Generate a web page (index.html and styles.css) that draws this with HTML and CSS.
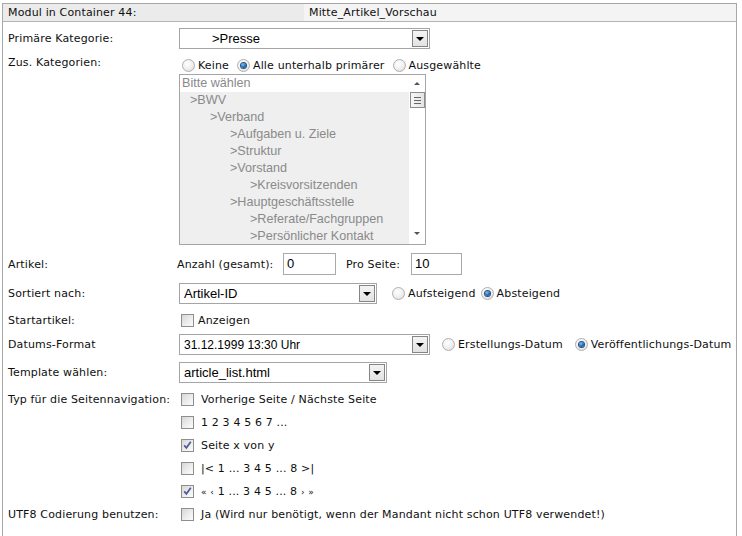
FILE: index.html
```html
<!DOCTYPE html>
<html lang="de">
<head>
<meta charset="utf-8">
<title>Modul</title>
<link rel="stylesheet" href="styles.css">
</head>
<body>
<div class="frame">
  <div class="head">
    <div class="head-l">Modul in Container 44:</div>
    <div class="head-r">Mitte_Artikel_Vorschau</div>
  </div>
  <div class="form">
    <div class="row r-primary">
      <div class="label">Primäre Kategorie:</div>
      <div class="ctrl">
        <div class="select w251"><span class="sel-text indent">&gt;Presse</span><span class="sel-btn"><span class="tri"></span></span></div>
      </div>
    </div>

    <div class="row r-zus">
      <div class="label">Zus. Kategorien:</div>
      <div class="ctrl col">
        <div class="opts zus-opts">
          <span class="opt"><span class="radio"></span>Keine</span>
          <span class="opt"><span class="radio on"></span>Alle unterhalb primärer</span>
          <span class="opt"><span class="radio"></span>Ausgewählte</span>
        </div>
        <div class="listbox">
          <div class="items">
            <div class="item first">Bitte wählen</div>
            <div class="item l1">&gt;BWV</div>
            <div class="item l2">&gt;Verband</div>
            <div class="item l3">&gt;Aufgaben u. Ziele</div>
            <div class="item l3">&gt;Struktur</div>
            <div class="item l3">&gt;Vorstand</div>
            <div class="item l4">&gt;Kreisvorsitzenden</div>
            <div class="item l3">&gt;Hauptgeschäftsstelle</div>
            <div class="item l4">&gt;Referate/Fachgruppen</div>
            <div class="item l4">&gt;Persönlicher Kontakt</div>
          </div>
          <div class="scroll">
            <span class="sarrow up"></span>
            <span class="thumb"><i></i><i></i><i></i></span>
            <span class="sarrow down"></span>
          </div>
        </div>
      </div>
    </div>

    <div class="row r-artikel">
      <div class="label">Artikel:</div>
      <div class="ctrl">
        <span class="lab-anzahl">Anzahl (gesamt):</span>
        <span class="input w53">0</span>
        <span class="lab-pro">Pro Seite:</span>
        <span class="input w52">10</span>
      </div>
    </div>

    <div class="row r-sort">
      <div class="label">Sortiert nach:</div>
      <div class="ctrl">
        <div class="select w198"><span class="sel-text">Artikel-ID</span><span class="sel-btn"><span class="tri"></span></span></div>
        <div class="opts sort-opts">
          <span class="opt"><span class="radio"></span>Aufsteigend</span>
          <span class="opt"><span class="radio on"></span>Absteigend</span>
        </div>
      </div>
    </div>

    <div class="row r-start">
      <div class="label">Startartikel:</div>
      <div class="ctrl">
        <span class="opt chk-opt"><span class="check"></span>Anzeigen</span>
      </div>
    </div>

    <div class="row r-datum">
      <div class="label">Datums-Format</div>
      <div class="ctrl">
        <div class="select w251"><span class="sel-text sm">31.12.1999 13:30 Uhr</span><span class="sel-btn"><span class="tri"></span></span></div>
        <div class="opts datum-opts">
          <span class="opt"><span class="radio"></span>Erstellungs-Datum</span>
          <span class="opt"><span class="radio on"></span>Veröffentlichungs-Datum</span>
        </div>
      </div>
    </div>

    <div class="row r-template">
      <div class="label">Template wählen:</div>
      <div class="ctrl">
        <div class="select w208"><span class="sel-text">article_list.html</span><span class="sel-btn"><span class="tri"></span></span></div>
      </div>
    </div>

    <div class="row r-typ">
      <div class="label">Typ für die Seitennavigation:</div>
      <div class="ctrl col">
        <span class="opt nav-opt"><span class="check"></span>Vorherige Seite / Nächste Seite</span>
        <span class="opt nav-opt"><span class="check"></span>1 2 3 4 5 6 7 ...</span>
        <span class="opt nav-opt"><span class="check on"><svg viewBox="0 0 13 13" width="13" height="13"><path d="M3.2 6.4 L5.4 8.8 L9.8 2.8" fill="none" stroke="#4a5c96" stroke-width="1.7"/></svg></span>Seite x von y</span>
        <span class="opt nav-opt"><span class="check"></span>|&lt; 1 ... 3 4 5 ... 8 &gt;|</span>
        <span class="opt nav-opt"><span class="check on"><svg viewBox="0 0 13 13" width="13" height="13"><path d="M3.2 6.4 L5.4 8.8 L9.8 2.8" fill="none" stroke="#4a5c96" stroke-width="1.7"/></svg></span><span><span class="small">«</span> <span class="small">‹</span> 1 ... 3 4 5 ... 8 <span class="small">›</span> <span class="small">»</span></span></span>
      </div>
    </div>

    <div class="row r-utf">
      <div class="label">UTF8 Codierung benutzen:</div>
      <div class="ctrl">
        <span class="opt nav-opt"><span class="check"></span>Ja (Wird nur benötigt, wenn der Mandant nicht schon UTF8 verwendet!)</span>
      </div>
    </div>
  </div>
</div>
</body>
</html>
```

FILE: styles.css
```css
* { box-sizing: border-box; }
html, body { margin: 0; padding: 0; background: #fff; }
body {
  font-family: "DejaVu Sans", Verdana, sans-serif;
  font-size: 11px;
  letter-spacing: 0.15px;
  color: #0f0f0f;
}
.frame {
  margin: 3px 0 0 2px;
  width: 735px;
  height: 533px;
  border: 1px solid #a8a8a8;
  border-bottom: none;
}
.head {
  display: flex;
  height: 18px;
  border-bottom: 1px solid #b4b4b4;
  line-height: 17px;
}
.head-l {
  width: 301px;
  background: #ebebeb;
  padding-left: 5px;
}
.head-r {
  flex: 1;
  background: #f4f4f4;
  padding-left: 5px;
}
.row { display: flex; align-items: center; }
.label {
  width: 176px;
  flex: none;
  padding-left: 5px;
  white-space: nowrap;
}
.ctrl { display: flex; align-items: center; white-space: nowrap; }
.ctrl.col { flex-direction: column; align-items: flex-start; }

.r-primary { margin-top: 6px; height: 21px; }
.r-zus { margin-top: 7px; align-items: flex-start; }
.r-zus .label { line-height: 14px; }
.r-artikel { margin-top: 8px; height: 22px; }
.r-sort { margin-top: 8px; height: 21px; }
.r-start { margin-top: 7px; height: 18px; }
.r-datum { margin-top: 5px; height: 21px; }
.r-template { margin-top: 7px; height: 21px; }
.r-typ { margin-top: 5px; align-items: flex-start; }
.r-typ .label { line-height: 23px; }
.r-utf { height: 23px; }

/* select */
.select {
  display: flex;
  align-items: center;
  height: 21px;
  border: 1px solid #a5a5a5;
  background: #fff;
  font-family: "Liberation Sans", Arial, sans-serif;
  font-size: 13px;
  letter-spacing: 0;
  color: #000;
}
.w251 { width: 251px; }
.w198 { width: 198px; }
.w208 { width: 208px; }
.sel-text { flex: 1; padding-left: 4px; }
.sel-text.sm { font-size: 12px; }
.sel-text.indent { padding-left: 32px; }
.sel-btn {
  width: 16px;
  height: 17px;
  margin-right: 1px;
  border: 1px solid #858585;
  background: linear-gradient(#f4f4f4, #e2e2e2);
  display: flex;
  align-items: center;
  justify-content: center;
}
.tri {
  width: 0; height: 0;
  border-left: 4px solid transparent;
  border-right: 4px solid transparent;
  border-top: 4px solid #000;
}

/* radios & checkboxes */
.opts { display: flex; align-items: center; }
.opt { display: inline-flex; align-items: center; }
.radio {
  width: 13px; height: 13px;
  border-radius: 50%;
  border: 1px solid #b0b0b0;
  background: radial-gradient(circle at 40% 35%, #ffffff 0%, #eeeeee 55%, #d4d4d4 100%);
  margin-right: 3px;
  position: relative;
  flex: none;
}
.radio.on::after {
  content: "";
  position: absolute;
  left: 3px; top: 3px;
  width: 5px; height: 5px;
  border-radius: 50%;
  background: radial-gradient(circle at 40% 35%, #7cc4ff 0%, #1f6fc0 50%, #0a3466 100%);
  box-shadow: 0 0 0 1px #2d4f78;
}
.zus-opts { height: 18px; margin-left: 3px; }
.zus-opts .opt + .opt { margin-left: 8px; }
.sort-opts { margin-left: 15px; }
.sort-opts .opt + .opt { margin-left: 5px; }
.datum-opts { margin-left: 12px; }
.datum-opts .opt + .opt { margin-left: 12px; }

.check {
  width: 13px; height: 13px;
  border: 1px solid #8e8e8e;
  background: linear-gradient(135deg, #d6d6d6 0%, #efefef 60%, #fbfbfb 100%);
  flex: none;
  position: relative;
}
.check svg { position: absolute; left: -1px; top: -1px; }
.chk-opt { margin-left: 2px; }
.chk-opt .check { margin-right: 4px; }
.nav-opt { height: 23px; margin-left: 2px; }
.nav-opt .check { margin-right: 7px; }
.small { font-size: 9px; }

/* listbox */
.listbox {
  display: flex;
  width: 247px;
  height: 171px;
  border: 1px solid #a5a5a5;
  background: #fff;
  overflow: hidden;
}
.items {
  flex: 1;
  background: #efefef;
  font-family: "Liberation Sans", Arial, sans-serif;
  font-size: 12.6px;
  letter-spacing: 0;
  color: #8a8a8a;
}
.item { height: 17px; line-height: 17px; padding-left: 2px; }
.item.first { background: #fff; }
.item.l1 { padding-left: 10px; }
.item.l2 { padding-left: 30px; }
.item.l3 { padding-left: 50px; }
.item.l4 { padding-left: 70px; }
.scroll {
  width: 16px;
  flex: none;
  background: #fff;
  display: flex;
  flex-direction: column;
  align-items: center;
}
.sarrow {
  width: 0; height: 0;
  border-left: 3px solid transparent;
  border-right: 3px solid transparent;
}
.sarrow.up { border-bottom: 3px solid #555; margin-top: 7px; }
.sarrow.down { border-top: 3px solid #555; margin-top: 124px; }
.thumb {
  width: 15px;
  height: 16px;
  margin-top: 7px;
  border: 1px solid #8c8c8c;
  background: linear-gradient(90deg, #f6f6f6, #e4e4e4);
  display: flex;
  flex-direction: column;
  align-items: center;
  justify-content: center;
  gap: 2px;
}
.thumb i { display: block; width: 7px; height: 1px; background: #666; }

/* inputs */
.lab-anzahl { margin-left: -2px; width: 106px; }
.lab-pro { margin-left: 10px; width: 65px; }
.input {
  display: inline-block;
  height: 22px;
  line-height: 20px;
  border: 1px solid #a9a9a9;
  padding-left: 3px;
  font-family: "Liberation Sans", Arial, sans-serif;
  font-size: 13px;
  letter-spacing: 0;
  color: #000;
}
.w53 { width: 53px; }
.w52 { width: 51px; }
```
